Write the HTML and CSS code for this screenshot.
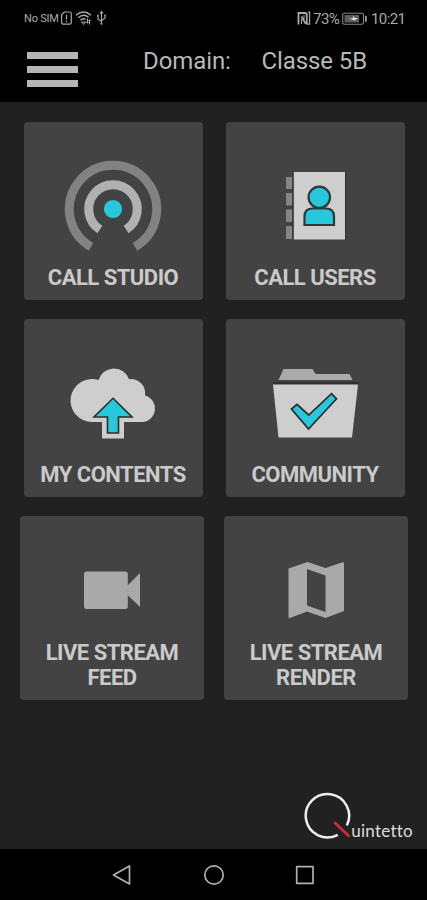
FILE: index.html
```html
<!DOCTYPE html>
<html lang="en">
<head>
<meta charset="utf-8">
<title>Quintetto</title>
<link rel="stylesheet" href="styles.css">
</head>
<body>
<div class="screen">
  <div class="status">
    <span class="sim">No SIM</span>
    <svg class="status-left" width="48" height="16" viewBox="60 10 48 16" fill="none" stroke="#aaa" stroke-width="1.2">
      <path d="M64.3 12H69.5Q71.3 12 71.3 13.8V22.5Q71.3 24.2 69.5 24.2H63.3Q61.6 24.2 61.6 22.5V14.8Z"/>
      <path d="M66.5 14.8V19.5M66.5 20.8V22.3"/>
      <path d="M76 15.3Q83.5 8.8 91 15.3M78.3 17.8Q83.5 13 88.5 17.3M80.5 20.3Q83 17.8 85.5 19.5" stroke-width="1.5"/>
      <path d="M81.5 22L83.5 24.5L85.5 22ZM87.5 18.5V23M89.5 20V24.5M86.5 22L87.5 23.3L88.5 22M88.5 21L89.5 19.7L90.5 21" stroke-width="1"/>
      <path d="M101.5 12.5V24M98 16V19L101.5 21.5M105 15.5V18.3L101.5 20.5M100 13.5L101.5 11.5L103 13.5" stroke-width="1.1"/>
      <circle cx="101.5" cy="23.8" r="1" fill="#aaa" stroke="none"/>
      <path d="M97.2 15.5H98.8M104.2 15.5H105.8" stroke-width="1.5"/>
    </svg>
    <svg class="nfc" width="14" height="14" viewBox="297 11 14 14" fill="none" stroke="#aaa">
      <path d="M298.5 24.5V13H305Q306.800 13 306.800 14.800V24M301.500 16.500L305.800 24" stroke-width="1.8"/>
      <path d="M301.500 19V24M304 15V19.500" stroke-width="1"/>
      <path d="M308 12.2H309.6V24.2H306.5" stroke-width="1.2"/>
    </svg>
    <span class="percent">73%</span>
    <svg class="battery" width="26" height="13" viewBox="342 12 26 13">
      <rect x="342.7" y="13.2" width="20.8" height="11" rx="1.8" fill="none" stroke="#888" stroke-width="1.1"/>
      <rect x="344.5" y="15" width="14.5" height="7.5" fill="#5e5e5e"/>
      <path d="M348.5 18.5H352L354 16L354.5 18H358L354.5 20.5L352.5 19.8Z" fill="#ddd"/>
      <rect x="365" y="15.5" width="1.8" height="6.5" rx=".8" fill="#999"/>
    </svg>
    <span class="clock">10:21</span>
  </div>
  <header class="appbar">
    <div class="menu"><i></i><i></i><i></i></div>
    <span class="domain">Domain:</span>
    <span class="class-name">Classe 5B</span>
  </header>
  <main class="content">
    <div class="row">
      <section class="card">
        <svg width="100" height="100" viewBox="-50 -50 100 100" fill="none" stroke-width="9">
          <path d="M-22 37.8A43.7 43.7 0 1 1 22 37.8" stroke="#828282"/>
          <path d="M-13.1 20.5A24.3 24.3 0 1 1 13.1 20.5" stroke="#b1b1b1"/>
          <circle r="9.1" fill="#28c8dc"/>
        </svg>
        <h2>CALL STUDIO</h2>
      </section>
      <section class="card">
        <svg width="100" height="100" viewBox="265 158.5 100 100">
          <path d="M286 176.5H292.5V188.5H286ZM286 192.5H292.5V205H286ZM286 209H292.5V221.5H286ZM286 225.5H292.5V238.5H286Z" fill="#858585"/>
          <path d="M292.3 171H293.8V239H292.3ZM345 171.5H346V239H345Z" fill="#303030"/>
          <path d="M293.8 171.5H345V239H293.8Z" fill="#cecece"/>
          <path d="M304.5 224.5V216Q304.5 208 312.5 208H326Q334 208 334 216V224.5Z" fill="#28c8dc" stroke="#30383a" stroke-width="2.2"/>
          <circle cx="319.3" cy="196.8" r="10.7" fill="#28c8dc" stroke="#30383a" stroke-width="2.2"/>
        </svg>
        <h2>CALL USERS</h2>
      </section>
    </div>
    <div class="row second">
      <section class="card">
        <svg width="100" height="100" viewBox="63 355.5 100 100">
          <path d="M102 421.5H92A21.5 21.5 0 1 1 98.5 379.5A16 16 0 0 1 129 378.8A14 14 0 0 1 145 395A13.5 13.5 0 0 1 142.5 421.5H124V438H102Z" fill="#cecece"/>
          <path d="M113 397.8L132 416.5H118.5V432.5H107.5V416.5H94Z" fill="#28c8dc" stroke="#292d2e" stroke-width="1.6"/>
        </svg>
        <h2>MY CONTENTS</h2>
      </section>
      <section class="card">
        <svg width="100" height="100" viewBox="265 355.5 100 100">
          <path d="M278.5 379.5L283.5 368.5H312.5L315.5 373.5H349.5L352.5 379.5Z" fill="#ababab"/>
          <path d="M273 381.5H358.5V384H273Z" fill="#303030"/>
          <path d="M273 384H358L352 437H278.5Z" fill="#cecece"/>
          <path d="M291.5 408.5L297 403.8L308.7 414.5L331.5 393.2L336.5 398.3L308.5 428.5Z" fill="#28c8dc" stroke="#292d2e" stroke-width="1.7"/>
        </svg>
        <h2>COMMUNITY</h2>
      </section>
    </div>
    <div class="row third">
      <section class="card large">
        <svg width="70" height="70" viewBox="77 555.5 70 70" fill="#a9a9a9">
          <rect x="84" y="572" width="43.8" height="37.5" rx="2.5"/>
          <path d="M126 587.5L140 573.5V607.5L126 594Z"/>
        </svg>
        <h2>LIVE STREAM<br>FEED</h2>
      </section>
      <section class="card large">
        <svg width="70" height="70" viewBox="281 555.5 70 70" fill="#a9a9a9">
          <path fill-rule="evenodd" d="M288.5 569L307.5 562.5L325.5 568.5L342.5 562.8Q344 562.5 344 564V611.5L325.5 618.5L307 612L290 618.5Q288.5 619 288.5 617.5ZM307 569.5V606L325.5 612.5V576Z"/>
        </svg>
        <h2>LIVE STREAM<br>RENDER</h2>
      </section>
    </div>
    <footer class="brand">
      <svg width="48" height="50" viewBox="303 790 48 50" fill="none">
        <path d="M346.8 825.5A21.7 21.7 0 1 0 337.8 834.8" stroke="#eee" stroke-width="2.5"/>
        <path d="M334.3 822.3L349.5 836.5" stroke="#d52b34" stroke-width="2.8"/>
      </svg>
      <span>uintetto</span>
    </footer>
  </main>
  <nav class="nav">
    <svg width="20" height="22" viewBox="0 0 20 22"><path d="M1.5 11L17.5 2V20Z"/></svg>
    <svg width="22" height="22" viewBox="0 0 22 22"><circle cx="11" cy="11" r="9.2"/></svg>
    <svg width="20" height="22" viewBox="0 0 20 22"><rect x="1.7" y="2.7" width="16.3" height="16.6"/></svg>
  </nav>
</div>
</body>
</html>
```
FILE: styles.css
```css
* { box-sizing: border-box; }
body { margin: 0; background: #000; font-family: Roboto, sans-serif; }
svg { display: block; flex: none; }
.screen { width: 427px; height: 900px; display: flex; flex-direction: column; overflow: hidden; }
.status { height: 36px; display: flex; align-items: flex-start; color: #aaa; padding-left: 24px; white-space: nowrap; }
.sim { width: 36px; margin-top: 12px; font-size: 11px; line-height: 14px; letter-spacing: -.2px; }
.status-left { margin-top: 10px; }
.nfc { margin: 11px 0 0 189px; }
.percent { width: 31px; margin-top: 10px; padding-left: 2px; font-size: 15px; line-height: 18px; letter-spacing: -.5px; }
.battery { margin-top: 12px; }
.clock { margin: 10px 0 0 3px; font-size: 15px; line-height: 18px; letter-spacing: -.6px; }
.appbar { height: 66px; display: flex; align-items: flex-start; color: #b8b8b8; font-size: 24px; line-height: 28px; white-space: nowrap; }
.menu { width: 51px; margin: 16px 0 0 27px; display: flex; flex-direction: column; gap: 7px; }
.menu i { height: 7px; background: #b5b5b5; }
.domain { width: 118.5px; margin: 11px 0 0 65px; letter-spacing: -.1px; }
.class-name { margin-top: 11px; letter-spacing: -.1px; }
.content { height: 747px; background: #212121; display: flex; flex-direction: column; padding-top: 19.5px; }
.row { display: flex; gap: 23px; padding-left: 23.5px; }
.second { margin-top: 19px; }
.third { margin-top: 19px; gap: 20px; padding-left: 20px; }
.card { width: 179px; height: 178px; padding-top: 37px; background: #434343; border-radius: 4px; display: flex; flex-direction: column; align-items: center; }
.large { width: 184px; height: 184px; padding-top: 39.5px; }
h2 { margin: 6px 0 0; color: #cacaca; font-size: 22px; font-weight: 700; line-height: 25px; letter-spacing: -.5px; text-align: center; white-space: nowrap; }
.large h2 { margin-top: 15px; }
.brand { margin: auto 14px 9px auto; display: flex; align-items: flex-end; color: #ddd; font: 17px/19px Lato, sans-serif; letter-spacing: .25px; }
.nav { height: 51px; display: flex; align-items: center; justify-content: space-between; padding: 0 112px; }
.nav svg { fill: none; stroke: #b0b0b0; stroke-width: 1.7; stroke-linejoin: round; }
```
